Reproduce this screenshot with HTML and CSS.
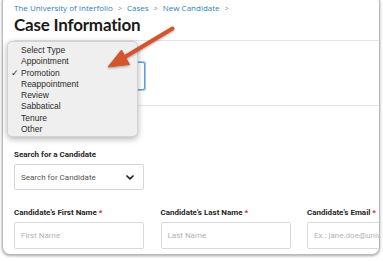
FILE: index.html
```html
<!DOCTYPE html>
<html lang="en">
<head>
    <meta charset="UTF-8">
    <meta name="viewport" content="width=device-width, initial-scale=1.0">
    <title>Case Information</title>
    <link rel="stylesheet" href="styles.css">
</head>
<body>
    <div class="window">
        <div class="page-header">
            <nav class="breadcrumb">
                <a href="#">The University of Interfolio</a>
                <span class="sep">&gt;</span>
                <a href="#">Cases</a>
                <span class="sep">&gt;</span>
                <a href="#">New Candidate</a>
                <span class="sep">&gt;</span>
            </nav>
            <h1>Case Information</h1>
        </div>

        <div class="section type-section">
            <div class="select-box focused"></div>
        </div>

        <div class="section candidate-section">
            <label class="field-label">Search for a Candidate</label>
            <div class="select-box search-box">
                <span>Search for Candidate</span>
                <svg class="chevron" width="8" height="5" viewBox="0 0 8 5">
                    <path d="M1 1 L4 3.9 L7 1" fill="none" stroke="#222" stroke-width="1.7" stroke-linecap="round" stroke-linejoin="round"/>
                </svg>
            </div>

            <div class="name-row">
                <div class="field">
                    <label class="field-label">Candidate's First Name <span class="req">*</span></label>
                    <div class="input">First Name</div>
                </div>
                <div class="field">
                    <label class="field-label">Candidate's Last Name <span class="req">*</span></label>
                    <div class="input">Last Name</div>
                </div>
                <div class="field">
                    <label class="field-label">Candidate's Email <span class="req">*</span></label>
                    <div class="input">Ex.: jane.doe@university.edu</div>
                </div>
            </div>
        </div>
    </div>

    <!-- native select popup, open over the case type box -->
    <ul class="type-menu">
        <li>Select Type</li>
        <li>Appointment</li>
        <li class="checked">Promotion</li>
        <li>Reappointment</li>
        <li>Review</li>
        <li>Sabbatical</li>
        <li>Tenure</li>
        <li>Other</li>
    </ul>

    <svg class="callout" width="383" height="261" viewBox="0 0 383 261">
        <defs>
            <filter id="soft" x="-20%" y="-20%" width="140%" height="140%">
                <feDropShadow dx="0" dy="1" stdDeviation="1" flood-color="#000" flood-opacity="0.35"/>
            </filter>
        </defs>
        <g filter="url(#soft)" fill="#d2552d" stroke="#d2552d">
            <line x1="124" y1="57.5" x2="172.5" y2="28.5" stroke-width="4" stroke-linecap="round"/>
            <polygon points="108,67 121.5,50 129.5,64.5" stroke-width="1" stroke-linejoin="round"/>
        </g>
    </svg>
</body>
</html>
```

FILE: styles.css
```css
body {
    margin: 0;
    background: #fff;
    font-family: Roboto, 'Liberation Sans', sans-serif;
    color: #222;
    position: relative;
    width: 383px;
    height: 261px;
    overflow: hidden;
}

.window {
    box-sizing: border-box;
    margin: -6px 0 0 2px;
    width: 378px;
    height: 261px;
    padding: 7px 0 0 11px;
    background: #fff;
    border: 1px solid #b9b9b9;
    border-radius: 8px;
    box-shadow: 0 1px 3px rgba(0, 0, 0, 0.35);
    overflow: hidden;
}

.page-header {
    border-bottom: 1px solid #e5e5e5;
    padding-bottom: 5px;
}

.breadcrumb {
    font-family: 'Open Sans', sans-serif;
    font-size: 8px;
    line-height: 11px;
    white-space: nowrap;
}

.breadcrumb a {
    color: #2f80bb;
    text-decoration: none;
}

.breadcrumb .sep {
    color: #888;
    font-size: 7px;
    margin: 0 3px;
}

h1 {
    font-family: Lato, sans-serif;
    font-weight: 700;
    font-size: 17px;
    letter-spacing: -0.2px;
    line-height: 20px;
    margin: 1px 0 0;
    color: #1a1a1a;
}

.section {
    border-bottom: 1px solid #e5e5e5;
}

.type-section {
    padding: 21px 0 15px;
}

.select-box {
    box-sizing: border-box;
    width: 131px;
    height: 28px;
    border: 1px solid #d6d6d6;
    border-radius: 2px;
    background: #fff;
}

.select-box.focused {
    border-color: #5d9fd6;
    box-shadow: 0 0 0 1px #9cc5ea;
}

.candidate-section {
    border-bottom: none;
    padding-top: 44px;
}

.field-label {
    display: block;
    font-size: 8px;
    line-height: 10px;
    font-weight: 700;
    color: #1f1f1f;
    margin-bottom: 4px;
    white-space: nowrap;
}

.req {
    color: #d0312d;
}

.search-box {
    width: 130px;
    height: 26px;
    display: flex;
    align-items: center;
    justify-content: space-between;
    padding: 0 9px 0 6px;
    font-size: 8px;
    color: #555;
}

.name-row {
    display: grid;
    grid-template-columns: 130px 130px 130px;
    column-gap: 16.5px;
    margin-top: 18px;
}

.input {
    box-sizing: border-box;
    height: 27px;
    border: 1px solid #d9d9d9;
    border-radius: 2px;
    padding: 0 6px;
    display: flex;
    align-items: center;
    font-size: 8px;
    color: #b3b3b3;
    white-space: nowrap;
    overflow: hidden;
}

.type-menu {
    position: absolute;
    left: 7px;
    top: 41px;
    width: 131px;
    height: 96px;
    box-sizing: border-box;
    margin: 0;
    padding: 3px 0 0;
    list-style: none;
    background: #efefef;
    border: 1px solid #d2d2d2;
    border-radius: 5px;
    box-shadow: 0 2px 6px rgba(0, 0, 0, 0.3);
    font-family: 'Liberation Sans', Arial, sans-serif;
    font-size: 8.5px;
    color: #2b2b2b;
}

.type-menu li {
    line-height: 11.3px;
    padding-left: 13px;
    position: relative;
}

.type-menu li.checked::before {
    content: "\2713";
    position: absolute;
    left: 3px;
}

.callout {
    position: absolute;
    left: 0;
    top: 0;
    pointer-events: none;
}
```
